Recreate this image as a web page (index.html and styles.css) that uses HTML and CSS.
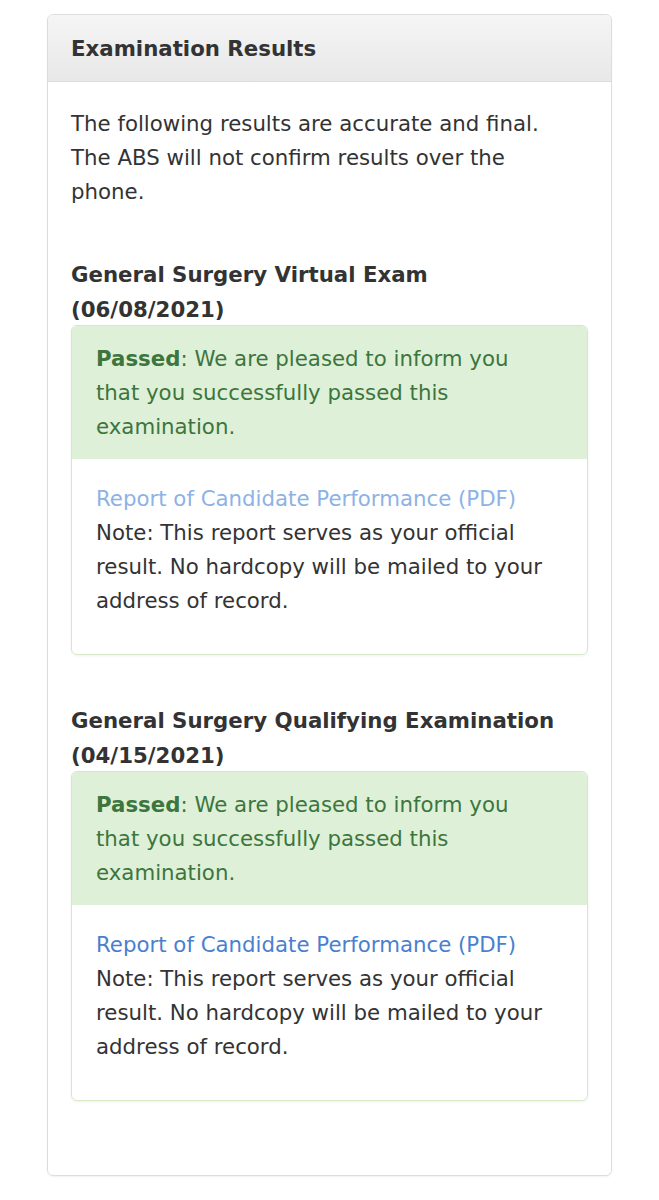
FILE: index.html
```html
<!DOCTYPE html>
<html lang="en">
<head>
    <meta charset="UTF-8">
    <meta name="viewport" content="width=device-width, initial-scale=1.0">
    <title>Examination Results</title>
    <link rel="stylesheet" href="styles.css">
</head>
<body>

<div class="panel">
    <div class="panel-heading">
        <h3>Examination Results</h3>
    </div>
    <div class="panel-body">
        <p class="intro">The following results are accurate and final. The ABS will not confirm results over the phone.</p>

        <div class="exam">
            <h4>General Surgery Virtual Exam (06/08/2021)</h4>
            <div class="result">
                <div class="result-status">
                    <strong>Passed</strong>: We are pleased to inform you that you successfully passed this examination.
                </div>
                <div class="result-body">
                    <a href="#" class="visited">Report of Candidate Performance (PDF)</a><br>
                    Note: This report serves as your official result. No hardcopy will be mailed to your address of record.
                </div>
            </div>
        </div>

        <div class="exam">
            <h4>General Surgery Qualifying Examination (04/15/2021)</h4>
            <div class="result">
                <div class="result-status">
                    <strong>Passed</strong>: We are pleased to inform you that you successfully passed this examination.
                </div>
                <div class="result-body">
                    <a href="#">Report of Candidate Performance (PDF)</a><br>
                    Note: This report serves as your official result. No hardcopy will be mailed to your address of record.
                </div>
            </div>
        </div>
    </div>
</div>

</body>
</html>
```

FILE: styles.css
```css
body {
    font-family: "DejaVu Sans", Verdana, sans-serif;
    font-size: 21.3px;
    line-height: 34px;
    color: #333;
    margin: 0;
    padding: 14px 47px 20px;
    background-color: #fff;
}
.panel {
    border: 1px solid #ddd;
    border-radius: 6px;
    box-shadow: 0 1px 2px rgba(0, 0, 0, 0.06);
    overflow: hidden;
}
.panel-heading {
    background: linear-gradient(#f5f5f5, #e8e8e8);
    border-bottom: 1px solid #ddd;
    padding: 1px 23px 0;
    height: 65px;
    display: flex;
    align-items: center;
}
.panel-heading h3 {
    margin: 0;
    font-size: 21.3px;
    font-weight: bold;
    color: #333;
}
.panel-body {
    padding: 25px 23px 26px;
}
.intro {
    margin: 0;
    padding-right: 7px;
}
.exam h4 {
    margin: 48px 0 0;
    padding-right: 7px;
    font-size: 21.3px;
    line-height: 35px;
    font-weight: bold;
    color: #333;
}
.result {
    border: 1px solid #d6e9c6;
    border-radius: 6px;
    box-shadow: 0 1px 3px rgba(0, 0, 0, 0.06);
    margin-top: -2px;
    margin-bottom: 48px;
    overflow: hidden;
}
.result-status {
    background-color: #dff0d8;
    color: #3c763d;
    padding: 16px 35px 15px 24px;
}
.result-body {
    padding: 23px 35px 36px 24px;
}
.result-body a {
    color: #4a7fcf;
    text-decoration: none;
}
.result-body a.visited {
    color: #8db2e6;
}
```
